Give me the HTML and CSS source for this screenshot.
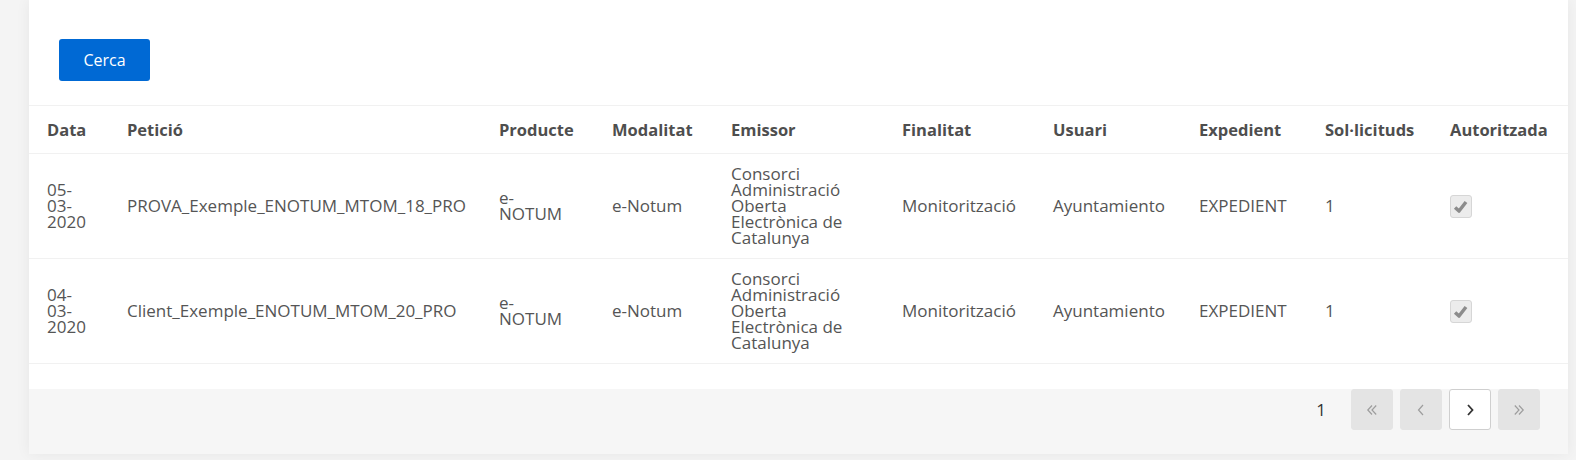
FILE: index.html
```html
<!DOCTYPE html>
<html>
    <head>
        <meta charset="utf-8">
        <title>Peticions</title>
        <link rel="stylesheet" href="styles.css">
    </head>
    <body>
        <div class="card">
            <div class="actions">
                <button type="button" class="btn-primary">Cerca</button>
            </div>
            <table class="results">
                <colgroup>
                    <col class="c-data">
                    <col class="c-peticio">
                    <col class="c-producte">
                    <col class="c-modalitat">
                    <col class="c-emissor">
                    <col class="c-finalitat">
                    <col class="c-usuari">
                    <col class="c-expedient">
                    <col class="c-sol">
                    <col class="c-auth">
                </colgroup>
                <thead>
                    <tr>
                        <th class="narrow">Data</th>
                        <th>Petició</th>
                        <th class="producte">Producte</th>
                        <th>Modalitat</th>
                        <th class="emissor">Emissor</th>
                        <th>Finalitat</th>
                        <th>Usuari</th>
                        <th>Expedient</th>
                        <th>Sol·licituds</th>
                        <th>Autoritzada</th>
                    </tr>
                </thead>
                <tbody>
                    <tr>
                        <td class="narrow">05-<wbr>03-<wbr>2020</td>
                        <td>PROVA_Exemple_ENOTUM_MTOM_18_PRO</td>
                        <td class="producte">e-NOTUM</td>
                        <td>e-Notum</td>
                        <td class="emissor">Consorci Administració Oberta Electrònica de Catalunya</td>
                        <td>Monitorització</td>
                        <td>Ayuntamiento</td>
                        <td>EXPEDIENT</td>
                        <td>1</td>
                        <td><span class="check"><svg viewBox="0 0 22 22" width="21" height="21"><path d="M4.5 12 L8.8 16 L16.5 6" fill="none" stroke="#8c8c8c" stroke-width="3.8" stroke-linejoin="round"/></svg></span></td>
                    </tr>
                    <tr>
                        <td class="narrow">04-<wbr>03-<wbr>2020</td>
                        <td>Client_Exemple_ENOTUM_MTOM_20_PRO</td>
                        <td class="producte">e-NOTUM</td>
                        <td>e-Notum</td>
                        <td class="emissor">Consorci Administració Oberta Electrònica de Catalunya</td>
                        <td>Monitorització</td>
                        <td>Ayuntamiento</td>
                        <td>EXPEDIENT</td>
                        <td>1</td>
                        <td><span class="check"><svg viewBox="0 0 22 22" width="21" height="21"><path d="M4.5 12 L8.8 16 L16.5 6" fill="none" stroke="#8c8c8c" stroke-width="3.8" stroke-linejoin="round"/></svg></span></td>
                    </tr>
                </tbody>
            </table>
            <div class="pager">
                <span class="page-num">1</span>
                <button type="button" class="page-btn" disabled>
                    <svg viewBox="0 0 16 16" width="16" height="16"><path d="M8 3.5 L3.8 8 L8 12.5 M12.2 3.5 L8 8 L12.2 12.5" fill="none" stroke="currentColor" stroke-width="1.2"/></svg>
                </button>
                <button type="button" class="page-btn" disabled>
                    <svg viewBox="0 0 16 16" width="16" height="16"><path d="M10 3 L5.5 8 L10 13" fill="none" stroke="currentColor" stroke-width="1.2"/></svg>
                </button>
                <button type="button" class="page-btn active">
                    <svg viewBox="0 0 16 16" width="16" height="16"><path d="M6 3 L10.5 8 L6 13" fill="none" stroke="currentColor" stroke-width="1.8"/></svg>
                </button>
                <button type="button" class="page-btn" disabled>
                    <svg viewBox="0 0 16 16" width="16" height="16"><path d="M3.8 3.5 L8 8 L3.8 12.5 M8 3.5 L12.2 8 L8 12.5" fill="none" stroke="currentColor" stroke-width="1.2"/></svg>
                </button>
            </div>
        </div>
    </body>
</html>
```

FILE: styles.css
```css
html {
    font-size: 17px;
    font-family: "Open Sans", "Liberation Sans", sans-serif;
}

* {
    box-sizing: border-box;
}

body {
    margin: 0;
    padding: 0 8px 7px 29px;
    background: #f4f4f4;
    color: #555;
}

.card {
    background: white;
    box-shadow: 0 0 14px 0 rgba(0, 0, 0, 0.06);
}

.actions {
    padding: 39px 30px 24px;
}

.btn-primary {
    width: 91px;
    height: 42px;
    border: none;
    border-radius: 3px;
    background: #0069d4;
    color: white;
    font-family: inherit;
    font-size: 16px;
    padding: 0;
}

.results {
    width: 100%;
    table-layout: fixed;
    border-collapse: collapse;
}

.c-data { width: 80px; }
.c-peticio { width: 372px; }
.c-producte { width: 113px; }
.c-modalitat { width: 119px; }
.c-emissor { width: 171px; }
.c-finalitat { width: 151px; }
.c-usuari { width: 146px; }
.c-expedient { width: 126px; }
.c-sol { width: 125px; }
.c-auth { width: 136px; }

.results th,
.results td {
    padding: 0 6px 0 18px;
    text-align: left;
    vertical-align: middle;
    border-top: 1px solid #f1f1f1;
    border-bottom: 1px solid #f1f1f1;
}

.results th {
    height: 48px;
    font-size: 16.5px;
    font-weight: bold;
    color: #4e4e4e;
}

.results td {
    height: 105px;
    font-size: 17px;
    line-height: 16px;
    color: #555;
}

.results .narrow {
    padding-right: 20px;
}

.results .producte {
    padding-right: 48px;
}

.results .emissor {
    padding-right: 30px;
}

.check {
    display: inline-flex;
    align-items: center;
    justify-content: center;
    width: 22px;
    height: 23px;
    border: 1px solid #d6d6d6;
    border-radius: 3px;
    background: #ececec;
    vertical-align: middle;
}

.pager {
    margin-top: 25px;
    height: 65px;
    background: #f6f6f6;
    display: flex;
    justify-content: flex-end;
    align-items: flex-start;
    gap: 7px;
    padding-right: 28px;
}

.page-num {
    height: 41px;
    line-height: 41px;
    margin-right: 18px;
    color: #333;
    font-size: 17px;
}

.page-btn {
    width: 42px;
    height: 41px;
    padding: 0;
    border: 1px solid #e4e4e4;
    border-radius: 3px;
    background: #e4e4e4;
    color: #9d9d9d;
    display: flex;
    align-items: center;
    justify-content: center;
}

.page-btn.active {
    background: white;
    border-color: #cfcfcf;
    color: #333;
}
```
